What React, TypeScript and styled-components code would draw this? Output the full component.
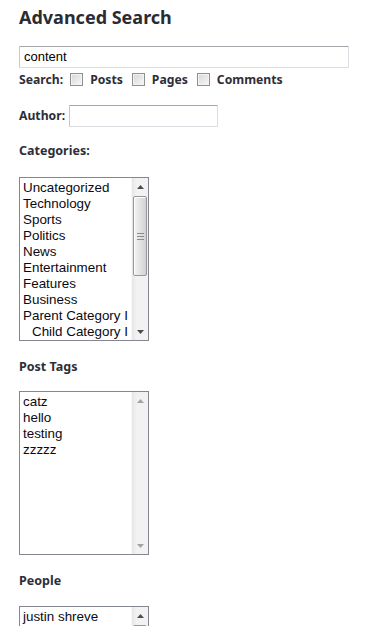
import React from "react";
import styled, { createGlobalStyle } from "styled-components";

const Global = createGlobalStyle`
  html, body { margin: 0; padding: 0; background: #ffffff; }
  body { font-family: "Liberation Sans", Arial, sans-serif; }
`;

const Page = styled.div`
  padding: 0 0 0 19px;
  width: 379px;
  height: 626px;
  box-sizing: border-box;
  overflow: hidden;
`;

const Title = styled.h2`
  margin: 0;
  padding-top: 4px;
  font-family: "Noto Sans", sans-serif;
  font-weight: 700;
  font-size: 18px;
  line-height: 26px;
  color: #2b2b33;
`;

const TextInput = styled.div<{ $w: number }>`
  box-sizing: border-box;
  width: ${(p) => p.$w}px;
  height: 22px;
  border: 1px solid #dcdde2;
  border-top-color: #a6a7ad;
  border-left-color: #c7c8cc;
  border-radius: 1px;
  padding: 0 4px;
  font-family: "Liberation Sans", Arial, sans-serif;
  font-size: 13px;
  line-height: 20px;
  color: #000;
  background: #fff;
`;

const SearchBox = styled(TextInput)`
  margin-top: 16px;
`;

const Row = styled.div`
  display: flex;
  align-items: center;
`;

const OptionsRow = styled(Row)`
  height: 22px;
  padding-top: 1px;
  box-sizing: border-box;
`;

const LabelText = styled.span`
  font-family: "Noto Sans", sans-serif;
  font-weight: 700;
  font-size: 12.2px;
  line-height: 16px;
  color: #2e2e38;
`;

const Check = styled.span<{ $first?: boolean }>`
  display: inline-block;
  box-sizing: border-box;
  width: 13px;
  height: 13px;
  margin: 0 7px 0 ${(p) => (p.$first ? 7 : 9)}px;
  border: 1px solid #8f8f8f;
  background: linear-gradient(135deg, #d6d6d6 0%, #eeeeee 70%, #f6f6f6 100%);
  box-shadow: inset 0 0 0 1px #f4f4f4;
`;

const AuthorRow = styled(Row)`
  margin-top: 15px;
  gap: 4px;
`;

const SectionLabel = styled.div<{ $top: number; $bottom: number }>`
  margin: ${(p) => p.$top}px 0 ${(p) => p.$bottom}px 0;
  font-family: "Noto Sans", sans-serif;
  font-weight: 700;
  font-size: 12.5px;
  line-height: 16px;
  color: #2e2e38;
`;

const ListBox = styled.div<{ $h: number }>`
  box-sizing: border-box;
  width: 130px;
  height: ${(p) => p.$h}px;
  border: 1px solid #828790;
  display: flex;
  background: #fff;
  overflow: hidden;
`;

const Items = styled.div`
  flex: 1;
  min-width: 0;
  overflow: hidden;
  padding-top: 2px;
`;

const Item = styled.div<{ $indent?: boolean }>`
  height: 16px;
  line-height: 16px;
  padding-left: ${(p) => (p.$indent ? 12 : 3)}px;
  font-family: "Liberation Sans", Arial, sans-serif;
  font-size: 13.4px;
  color: #0a0a14;
  white-space: nowrap;
  overflow: hidden;
`;

const Track = styled.div`
  width: 17px;
  flex: none;
  display: flex;
  flex-direction: column;
  background: linear-gradient(90deg, #e6e6e6 0%, #f2f2f2 30%, #f2f2f2 100%);
  border-left: 1px solid #f8f8f8;
  box-sizing: border-box;
`;

const ArrowBtn = styled.div`
  height: 17px;
  flex: none;
  display: flex;
  align-items: center;
  justify-content: center;
`;

const Spacer = styled.div`
  flex: 1;
`;

const Thumb = styled.div<{ $top: number; $h: number }>`
  margin: ${(p) => p.$top}px 1px 0 1px;
  height: ${(p) => p.$h}px;
  flex: none;
  box-sizing: border-box;
  border: 1px solid #979797;
  border-radius: 2px;
  background: linear-gradient(90deg, #f4f4f4 0%, #e4e4e4 45%, #d2d2d2 100%);
  box-shadow: inset 1px 1px 0 #ffffff;
  display: flex;
  align-items: center;
  justify-content: center;
`;

const Arrow = ({ dir, dim }: { dir: "up" | "down"; dim?: boolean }) => (
  <svg width="7" height="4" viewBox="0 0 7 4">
    <polygon
      points={dir === "up" ? "0,4 7,4 3.5,0" : "0,0 7,0 3.5,4"}
      fill={dim ? "#a3a3a3" : "#4d4d4d"}
    />
  </svg>
);

const Grip = () => (
  <svg width="7" height="7" viewBox="0 0 7 7">
    <rect x="0" y="0" width="7" height="1" fill="#8b8b8b" />
    <rect x="0" y="3" width="7" height="1" fill="#8b8b8b" />
    <rect x="0" y="6" width="7" height="1" fill="#8b8b8b" />
  </svg>
);

type Opt = { label: string; indent?: boolean };

const Select = ({
  items,
  height,
  thumb,
}: {
  items: Opt[];
  height: number;
  thumb?: { top: number; h: number };
}) => (
  <ListBox $h={height}>
    <Items>
      {items.map((it) => (
        <Item key={it.label} $indent={it.indent}>
          {it.label}
        </Item>
      ))}
    </Items>
    <Track>
      <ArrowBtn>
        <Arrow dir="up" dim={!thumb} />
      </ArrowBtn>
      {thumb && (
        <Thumb $top={thumb.top} $h={thumb.h}>
          <Grip />
        </Thumb>
      )}
      <Spacer />
      <ArrowBtn>
        <Arrow dir="down" dim={!thumb} />
      </ArrowBtn>
    </Track>
  </ListBox>
);

const categories: Opt[] = [
  { label: "Uncategorized" },
  { label: "Technology" },
  { label: "Sports" },
  { label: "Politics" },
  { label: "News" },
  { label: "Entertainment" },
  { label: "Features" },
  { label: "Business" },
  { label: "Parent Category I" },
  { label: "Child Category I", indent: true },
];

const tags: Opt[] = [
  { label: "catz" },
  { label: "hello" },
  { label: "testing" },
  { label: "zzzzz" },
];

const people: Opt[] = [{ label: "justin shreve" }];

export default function App() {
  return (
    <>
      <Global />
      <Page>
        <Title>Advanced Search</Title>
        <SearchBox $w={330}>content</SearchBox>
        <OptionsRow>
          <LabelText>Search:</LabelText>
          <Check $first />
          <LabelText>Posts</LabelText>
          <Check />
          <LabelText>Pages</LabelText>
          <Check />
          <LabelText>Comments</LabelText>
        </OptionsRow>
        <AuthorRow>
          <LabelText>Author:</LabelText>
          <TextInput $w={149} />
        </AuthorRow>
        <SectionLabel $top={16} $bottom={18}>Categories:</SectionLabel>
        <Select items={categories} height={164} thumb={{ top: 1, h: 80 }} />
        <SectionLabel $top={18} $bottom={16}>Post Tags</SectionLabel>
        <Select items={tags} height={164} />
        <SectionLabel $top={18} $bottom={17}>People</SectionLabel>
        <Select items={people} height={80} thumb={{ top: 1, h: 30 }} />
      </Page>
    </>
  );
}
